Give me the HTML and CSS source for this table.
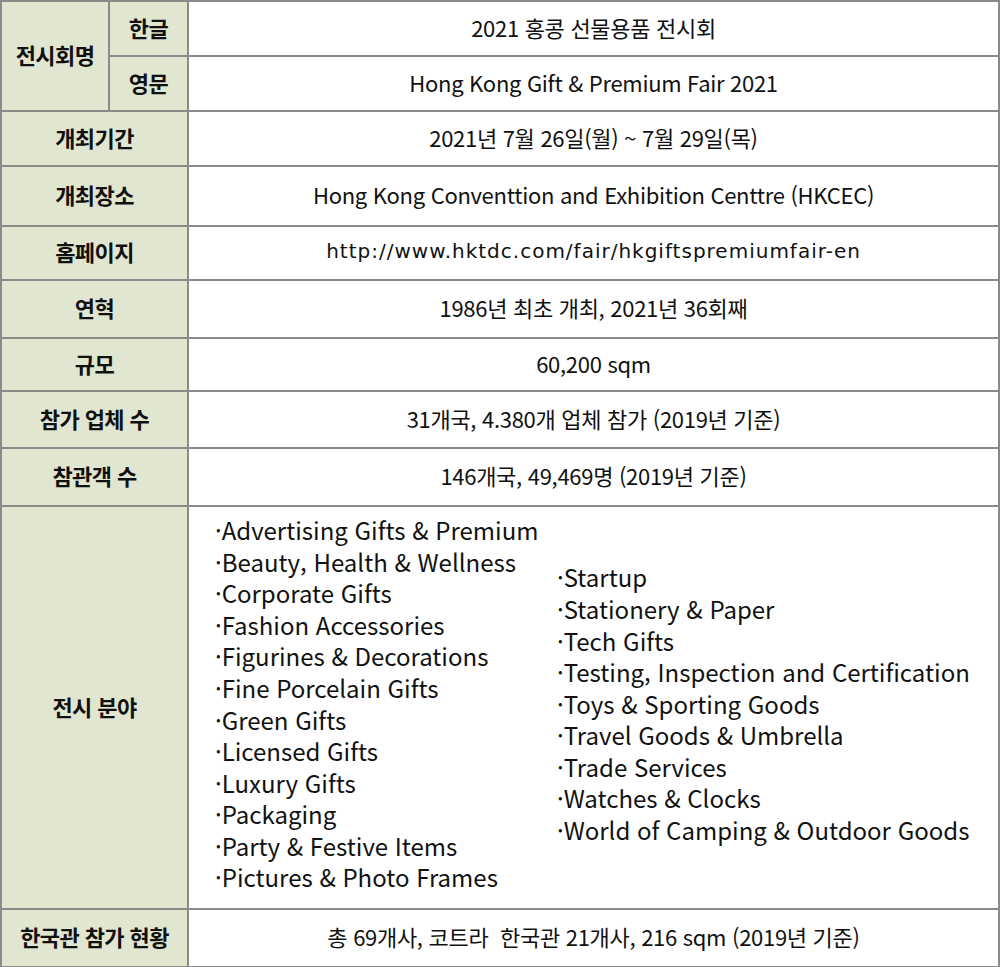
FILE: index.html
```html
<!DOCTYPE html>
<html lang="ko">
<head>
<meta charset="utf-8">
<link rel="stylesheet" href="styles.css">
</head>
<body>
<table class="info">
  <colgroup>
    <col class="c1"><col class="c2"><col class="c3">
  </colgroup>
  <tr class="r55">
    <th rowspan="2">전시회명</th>
    <th class="sub">한글</th>
    <td>2021 홍콩 선물용품 전시회</td>
  </tr>
  <tr class="r55">
    <th class="sub">영문</th>
    <td>Hong Kong Gift &amp; Premium Fair 2021</td>
  </tr>
  <tr class="r55 dark"><th colspan="2">개최기간</th><td>2021년 7월 26일(월) ~ 7월 29일(목)</td></tr>
  <tr class="r60"><th colspan="2">개최장소</th><td>Hong Kong Conventtion and Exhibition Centtre (HKCEC)</td></tr>
  <tr class="r54 dark"><th colspan="2">홈페이지</th><td class="url">http://www.hktdc.com/fair/hkgiftspremiumfair-en</td></tr>
  <tr class="r58"><th colspan="2">연혁</th><td>1986년 최초 개최, 2021년 36회째</td></tr>
  <tr class="r53"><th colspan="2">규모</th><td>60,200 sqm</td></tr>
  <tr class="r57"><th colspan="2">참가 업체 수</th><td>31개국, 4.380개 업체 참가 (2019년 기준)</td></tr>
  <tr class="r58"><th colspan="2">참관객 수</th><td>146개국, 49,469명 (2019년 기준)</td></tr>
  <tr class="r403">
    <th colspan="2">전시 분야</th>
    <td class="fields">
      <div class="cols">
        <ul class="list left">
          <li>·Advertising Gifts &amp; Premium</li>
          <li>·Beauty, Health &amp; Wellness</li>
          <li>·Corporate Gifts</li>
          <li>·Fashion Accessories</li>
          <li>·Figurines &amp; Decorations</li>
          <li>·Fine Porcelain Gifts</li>
          <li>·Green Gifts</li>
          <li>·Licensed Gifts</li>
          <li>·Luxury Gifts</li>
          <li>·Packaging</li>
          <li>·Party &amp; Festive Items</li>
          <li>·Pictures &amp; Photo Frames</li>
        </ul>
        <ul class="list right">
          <li>·Startup</li>
          <li>·Stationery &amp; Paper</li>
          <li>·Tech Gifts</li>
          <li>·Testing, Inspection and Certification</li>
          <li>·Toys &amp; Sporting Goods</li>
          <li>·Travel Goods &amp; Umbrella</li>
          <li>·Trade Services</li>
          <li>·Watches &amp; Clocks</li>
          <li>·World of Camping &amp; Outdoor Goods</li>
        </ul>
      </div>
    </td>
  </tr>
  <tr class="r58"><th colspan="2">한국관 참가 현황</th><td>총 69개사, 코트라&nbsp; 한국관 21개사, 216 sqm (2019년 기준)</td></tr>
</table>
</body>
</html>
```

FILE: styles.css
```css
html, body {
  margin: 0;
  padding: 0;
  background: #ffffff;
}
body {
  font-family: "Noto Sans CJK KR", "Liberation Sans", sans-serif;
  color: #111;
}
.info {
  width: 1000px;
  border-collapse: collapse;
  table-layout: fixed;
  border: 2px solid #222;
}
.c1 { width: 108px; }
.c2 { width: 79px; }
.info th, .info td {
  border: 2px solid #8a8a8a;
  padding: 0 0 4px 0;
  text-align: center;
  vertical-align: middle;
}
.info tr.dark th, .info tr.dark td {
  border-top-color: #333;
}
.info th {
  background: #e1e6d0;
  font-weight: 700;
  font-size: 22px;
  letter-spacing: -0.6px;
  color: #111;
}
.info td {
  font-size: 22px;
  letter-spacing: -0.3px;
  color: #111;
}
.info td.url {
  font-family: "DejaVu Sans", sans-serif;
  font-size: 20px;
  letter-spacing: 1px;
}
.r55 { height: 55px; }
.r60 { height: 60px; }
.r54 { height: 54px; }
.r58 { height: 58px; }
.r53 { height: 53px; }
.r57 { height: 57px; }
.r403 { height: 403px; }
.info td.fields {
  text-align: left;
  padding: 0 0 8px 0;
}
.cols {
  display: flex;
  align-items: center;
  padding-left: 26px;
}
.list {
  list-style: none;
  margin: 0;
  padding: 0;
  font-size: 24px;
  line-height: 31.6px;
  letter-spacing: 0;
}
.list.left { width: 342px; }
.list.right { flex: 1; }
```
